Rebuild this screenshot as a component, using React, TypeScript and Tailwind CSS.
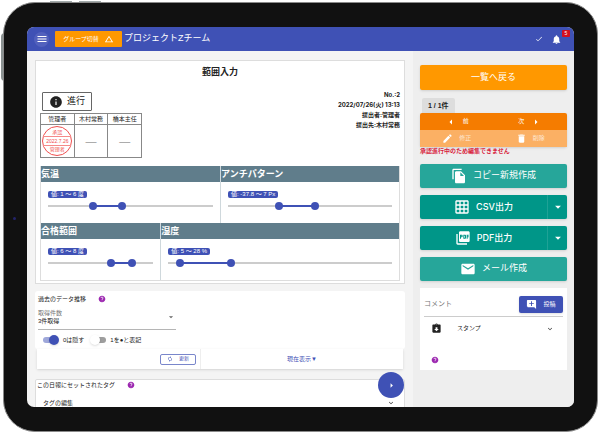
import { useId, useState } from "react";
import type { ReactNode } from "react";
import {
  MdAddComment,
  MdArrowDropDown,
  MdArrowLeft,
  MdArrowRight,
  MdAssignmentReturned,
  MdAutorenew,
  MdChangeHistory,
  MdCheck,
  MdDelete,
  MdEdit,
  MdEmail,
  MdExpandMore,
  MdGridOn,
  MdHelp,
  MdInfo,
  MdMenu,
  MdNotifications,
  MdPictureAsPdf,
} from "react-icons/md";

const thumb =
  "pointer-events-none absolute -left-1 top-0 m-0 h-2 w-[calc(100%+8px)] appearance-none bg-transparent [&::-webkit-slider-thumb]:pointer-events-auto [&::-webkit-slider-thumb]:size-2 [&::-webkit-slider-thumb]:appearance-none [&::-webkit-slider-thumb]:rounded-full [&::-webkit-slider-thumb]:bg-[#3f51b5]";

type RangeProps = {
  title: string;
  text: string;
  from: number;
  to: number;
  className: string;
};

function RangeCell({ title, text, from, to, className }: RangeProps) {
  const [low, setLow] = useState(from);
  const [high, setHigh] = useState(to);
  return (
    <section className={className}>
      <h3 className="h-4 bg-[#607d8b] text-[9px] leading-4 font-bold text-white">{title}</h3>
      <div className="px-[7px] pt-[9px] pb-[13px]">
        <span className="block h-[7px] w-fit rounded-[2px] bg-[#3f51b5] px-[3px] text-[6px] leading-[7px] text-white">
          {text}
        </span>
        <div className="relative mt-1 h-2 py-[3px]">
          <div className="h-[2px] bg-[#cccccc]">
            <div className="h-full bg-[#3f51b5]" style={{ marginLeft: `${low}%`, width: `${high - low}%` }} />
          </div>
          <input
            type="range"
            aria-label={`${title} 下限`}
            className={thumb}
            value={low}
            onChange={(e) => setLow(Math.min(Number(e.target.value), high))}
          />
          <input
            type="range"
            aria-label={`${title} 上限`}
            className={thumb}
            value={high}
            onChange={(e) => setHigh(Math.max(Number(e.target.value), low))}
          />
        </div>
      </div>
    </section>
  );
}

function Toggle({ label, on }: { label: string; on?: boolean }) {
  const id = useId();
  return (
    <div className="flex items-center">
      <input
        id={id}
        type="checkbox"
        defaultChecked={on}
        className="relative h-[10px] w-4 appearance-none before:absolute before:top-[2px] before:left-[2px] before:h-[6px] before:w-[14px] before:rounded-full before:bg-[#9e9e9e] after:absolute after:top-0 after:left-0 after:size-[10px] after:rounded-full after:bg-white after:shadow-sm checked:before:left-0 checked:before:bg-[#9fa8da] checked:after:left-[6px] checked:after:bg-[#3f51b5]"
      />
      <label htmlFor={id} className="pl-1">
        {label}
      </label>
    </div>
  );
}

function Help() {
  return (
    <button type="button" aria-label="ヘルプ" className="text-[#9c27b0]">
      <MdHelp className="size-2" />
    </button>
  );
}

function CopyIcon() {
  return (
    <svg viewBox="0 0 24 24" fill="currentColor" aria-hidden="true" className="size-4">
      <path d="M16 1H4c-1.1 0-2 .9-2 2v14h2V3h12V1z" />
      <path d="M15 5l6 6v10c0 1.1-.9 2-2 2H8c-1.1 0-2-.9-2-2V7c0-1.1.9-2 2-2h7zm-1 7h5.5L14 6.5V12z" />
    </svg>
  );
}

function ExportButton({ icon, label }: { icon: ReactNode; label: string }) {
  return (
    <div className="mt-[7px] flex h-6 rounded-[2px] bg-[#009688] text-white shadow">
      <button
        type="button"
        className="flex flex-1 items-center justify-center gap-[6px] font-['Inter','Noto_Sans_CJK_JP',sans-serif] font-medium"
      >
        {icon}
        {label}
      </button>
      <button
        type="button"
        aria-label={`${label} オプション`}
        className="flex w-5 items-center justify-center border-l border-[#1fa296]"
      >
        <MdArrowDropDown className="size-[14px]" />
      </button>
    </div>
  );
}

function Stamp() {
  return (
    <div className="mx-auto flex size-[30px] flex-col items-center justify-center rounded-full border border-[#f0504f] text-[5px] leading-[7px] text-[#f0504f]">
      <span>承認</span>
      <span className="w-full border-y border-[#f58a89] text-center leading-[8px]">2022.7.26</span>
      <span>管理者</span>
    </div>
  );
}

function Header() {
  return (
    <header className="flex h-6 items-center bg-[#3f51b5] text-white">
      <button
        type="button"
        aria-label="メニュー"
        className="ml-[7px] flex size-[15px] items-center justify-center rounded-full bg-[#5261bd]"
      >
        <MdMenu className="size-3" />
      </button>
      <button
        type="button"
        className="ml-[6px] flex h-4 w-[67px] items-center justify-center gap-[5px] rounded-[1px] bg-[#ff9800] text-[6px]"
      >
        グループ切替
        <MdChangeHistory className="size-[10px]" />
      </button>
      <h1 className="ml-[2px] text-[9px]">プロジェクトZチーム</h1>
      <MdCheck className="ml-auto size-2" />
      <button type="button" aria-label="通知" className="relative mr-3 ml-2">
        <MdNotifications className="size-[11px]" />
        <span className="absolute -top-1 -right-[8px] h-[7px] w-2 rounded-[1px] bg-[#d50f1f] text-center text-[5px] leading-[7px]">
          5
        </span>
      </button>
    </header>
  );
}

function Report() {
  return (
    <article className="border border-[#dddddd] bg-white px-1 pt-[5px] pb-[2px]">
      <h2 className="text-center text-[9px] leading-3 font-bold">範囲入力</h2>
      <div className="mt-3 flex items-start justify-between">
        <div className="pt-[2px]">
          <button
            type="button"
            className="ml-[2px] flex h-[19px] w-[50px] items-center justify-center gap-1 rounded-[1px] border border-[#666666] text-[9px]"
          >
            <MdInfo className="size-[14px]" />
            進行
          </button>
          <table className="mt-[2px] w-[102px] table-fixed border-collapse text-center text-[6px] leading-[10px]">
            <thead>
              <tr>
                {["管理者", "木村常務", "橋本主任"].map((name) => (
                  <th key={name} className="border border-[#888888] p-0 font-normal">
                    {name}
                  </th>
                ))}
              </tr>
            </thead>
            <tbody>
              <tr className="h-[33px]">
                <td className="border border-[#888888] p-0">
                  <Stamp />
                </td>
                <td className="border border-[#888888] p-0 text-[11px] text-[#999999]">―</td>
                <td className="border border-[#888888] p-0 text-[11px] text-[#999999]">―</td>
              </tr>
            </tbody>
          </table>
        </div>
        <p className="text-right font-['Inter','Noto_Sans_CJK_JP',sans-serif] text-[6px] leading-[10px] font-bold">
          No.:2
          <br />
          2022/07/26(火) 13:13
          <br />
          提出者:管理者
          <br />
          提出先:木村常務
        </p>
      </div>
      <div className="mt-2 border-x border-b border-[#dddddd]">
        <div className="flex">
          <RangeCell className="w-1/2" title="気温" text="値: 1 〜 6 度" from={27} to={45} />
          <RangeCell
            className="w-1/2 border-l border-[#cfd8dc]"
            title="アンチパターン"
            text="値: -37.8 〜 7 Px"
            from={31}
            to={53}
          />
        </div>
        <div className="flex">
          <RangeCell className="w-1/3" title="合格範囲" text="値: 6 〜 8 度" from={60} to={80} />
          <RangeCell
            className="w-2/3 border-l border-[#cfd8dc]"
            title="湿度"
            text="値: 5 〜 28 %"
            from={5}
            to={28}
          />
        </div>
      </div>
    </article>
  );
}

function History() {
  return (
    <section className="mt-[7px] text-[6px]">
      <div className="rounded-[3px] bg-white pt-1 pb-1 pl-[3px]">
        <div className="flex h-2 items-center gap-3">
          <h2>過去のデータ推移</h2>
          <Help />
        </div>
        <div className="mt-[6px] w-[138px] border-b border-[#b5b5b5] pb-1">
          <label htmlFor="count" className="block leading-2 text-[#777777]">
            取得件数
          </label>
          <div className="flex items-center">
            <select id="count" className="flex-1 appearance-none bg-transparent p-0 leading-2">
              <option>3件取得</option>
            </select>
            <MdArrowDropDown className="-mt-2 size-[10px] text-[#666666]" />
          </div>
        </div>
        <div className="mt-[5px] flex gap-[6px] pl-[5px]">
          <Toggle label="0は隠す" on />
          <Toggle label="1を●と表記" />
        </div>
      </div>
      <div className="mx-[2px] flex h-5 bg-white text-[#3f51b5] shadow">
        <div className="flex w-[164px] items-center justify-end border-r border-[#eeeeee] pr-1">
          <button
            type="button"
            className="flex h-[11px] w-9 items-center justify-center gap-[6px] rounded-[2px] border border-[#7986cb] text-[5px]"
          >
            <MdAutorenew className="size-[6px]" />
            更新
          </button>
        </div>
        <button type="button" className="flex-1">
          現在表示▼
        </button>
      </div>
    </section>
  );
}

function Tags() {
  return (
    <section className="mt-[10px] rounded-t-[2px] border border-[#dddddd] bg-white px-px pt-px text-[6px]">
      <div className="flex h-2 items-center gap-3">
        <h2>この日報にセットされたタグ</h2>
        <Help />
      </div>
      <button type="button" className="mt-2 flex h-3 w-full items-center justify-between pr-2 pl-[6px] leading-none">
        タグの編集
        <MdExpandMore className="size-2" />
      </button>
    </section>
  );
}

function Sidebar() {
  return (
    <aside className="w-[161px] shrink-0 bg-[#eeeeee] px-[7px] pt-[14px] text-[9px]">
      <button type="button" className="h-[25px] w-full rounded-[2px] bg-[#ff9800] text-white shadow">
        一覧へ戻る
      </button>
      <p className="mt-2 ml-[2px] h-[15px] w-fit rounded-t-[2px] bg-[#dddddd] px-[6px] text-[7px] leading-[15px] font-bold">
        1 / 1件
      </p>
      <div className="grid grid-cols-2 rounded-[2px] bg-[#f57c00] text-[6px] text-white shadow">
        <button type="button" className="flex h-[17px] items-center justify-center gap-[6px]">
          <MdArrowLeft className="size-3" />前
        </button>
        <button type="button" className="flex h-[17px] items-center justify-center gap-[6px]">
          次<MdArrowRight className="size-3" />
        </button>
        <button type="button" disabled className="flex h-[17px] items-center justify-center gap-[6px] bg-[#fbb064]">
          <MdEdit className="size-[11px]" />
          <span className="opacity-70">修正</span>
        </button>
        <button type="button" disabled className="flex h-[17px] items-center justify-center gap-[6px] bg-[#fbb064]">
          <MdDelete className="size-[11px]" />
          <span className="opacity-70">削除</span>
        </button>
      </div>
      <p className="text-[6px] leading-[9px] font-bold text-[#d81b3c]">承認進行中のため編集できません</p>
      <button
        type="button"
        className="mt-2 flex h-6 w-full items-center justify-center gap-[6px] rounded-[2px] bg-[#26a69a] text-white shadow"
      >
        <CopyIcon />
        コピー新規作成
      </button>
      <ExportButton icon={<MdGridOn className="size-4" />} label="CSV出力" />
      <ExportButton icon={<MdPictureAsPdf className="size-4" />} label="PDF出力" />
      <button
        type="button"
        className="mt-[7px] flex h-6 w-full items-center justify-center gap-[6px] rounded-[2px] bg-[#26a69a] text-white shadow"
      >
        <MdEmail className="size-4" />
        メール作成
      </button>
      <section className="mt-[7px] bg-white px-1 pt-2 pb-[6px] text-[6px]">
        <div className="flex items-center justify-between border-b border-[#cccccc] pb-[3px]">
          <input
            type="text"
            aria-label="コメント"
            placeholder="コメント"
            className="w-20 text-[7px] outline-none placeholder:text-[#777777]"
          />
          <button
            type="button"
            className="flex h-[17px] w-11 items-center justify-center gap-[6px] rounded-[2px] bg-[#3f51b5] text-white shadow"
          >
            <MdAddComment className="size-[11px]" />
            投稿
          </button>
        </div>
        <button type="button" className="flex h-[23px] w-full items-center pr-[9px] pl-[7px]">
          <MdAssignmentReturned className="size-[11px]" />
          <span className="ml-[15px]">スタンプ</span>
          <MdExpandMore className="ml-auto size-2" />
        </button>
        <div className="mt-4 flex pl-[7px]">
          <Help />
        </div>
      </section>
    </aside>
  );
}

export default function App() {
  return (
    <div className="relative h-screen bg-white py-[2px] pr-[2px] pl-[3px] font-['Liberation_Sans','Noto_Sans_CJK_JP',sans-serif] text-[#222222]">
      <span className="absolute top-px left-[50px] h-1 w-[22px] bg-[#a3abab]" />
      <span className="absolute top-px left-[79px] h-1 w-[22px] bg-[#a3abab]" />
      <span className="absolute top-[33px] left-[1px] h-12 w-1 rounded-l bg-[#8b9292]" />
      <div className="relative h-full rounded-[32px] border border-[#8a8a8a] bg-[#111111] px-[23px] py-6">
        <span className="absolute top-1/2 left-[9px] size-[3px] rounded-full bg-[#24246a]" />
        <div className="flex h-full flex-col overflow-hidden rounded-[7px] bg-[#f4f4f4]">
          <Header />
          <div className="flex min-h-0 flex-1">
            <main className="relative min-w-0 flex-1 overflow-hidden px-2 pt-[9px]">
              <Report />
              <History />
              <Tags />
              <button
                type="button"
                aria-label="次へ"
                className="absolute right-[9px] bottom-[9px] flex size-[26px] items-center justify-center rounded-full bg-[#3f51b5] text-white"
              >
                <MdArrowRight className="size-[11px]" />
              </button>
            </main>
            <Sidebar />
          </div>
        </div>
      </div>
    </div>
  );
}
